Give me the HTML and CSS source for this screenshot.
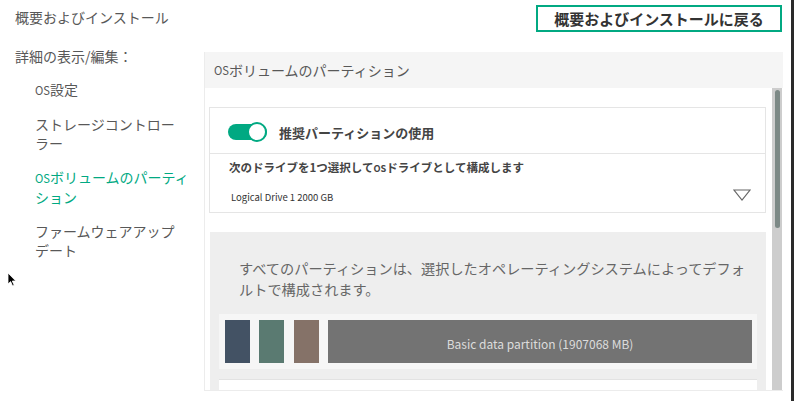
FILE: index.html
```html
<!DOCTYPE html>
<html lang="ja">
  <head>
    <meta charset="UTF-8" />
    <meta name="viewport" content="width=device-width, initial-scale=1.0" />
    <title>OSボリュームのパーティション</title>
    <link rel="stylesheet" href="styles.css">
  </head>
  <body>
    <div class="screen">
      <aside class="sidebar">
        <div class="side-title">概要およびインストール</div>
        <div class="side-label">詳細の表示/編集：</div>
        <ul class="side-menu">
          <li><span class="os">OS</span>設定</li>
          <li>ストレージコントロー<br />ラー</li>
          <li class="active"><span class="os">OS</span>ボリュームのパーティ<br />ション</li>
          <li>ファームウェアアップ<br />デート</li>
        </ul>
      </aside>

      <main class="main">
        <div class="toolbar">
          <button type="button" class="back-btn">概要およびインストールに戻る</button>
        </div>

        <section class="panel">
          <div class="panel-head"><span class="os">OS</span>ボリュームのパーティション</div>
          <div class="panel-body">
            <div class="panel-scroll">
              <div class="card">
                <div class="toggle-row">
                  <span class="switch"><span class="knob"></span></span>
                  <span class="toggle-label">推奨パーティションの使用</span>
                </div>
                <div class="drive-row">
                  <div class="drive-label">次のドライブを1つ選択して<span class="os">OS</span>ドライブとして構成します</div>
                  <div class="drive-select">
                    <span>Logical Drive 1 2000 GB</span>
                    <svg width="18" height="12" viewBox="0 0 18 12">
                      <path d="M1 1 L17 1 L9 11 Z" fill="none" stroke="#666" stroke-width="1.2" stroke-linejoin="miter" />
                    </svg>
                  </div>
                </div>
              </div>

              <div class="info">
                <p>すべてのパーティションは、選択したオペレーティングシステムによってデフォ<br />ルトで構成されます。</p>
                <div class="partbar">
                  <div class="part p1"></div>
                  <div class="part p2"></div>
                  <div class="part p3"></div>
                  <div class="part p-main">Basic data partition (1907068 MB)</div>
                </div>
                <div class="next-card"></div>
              </div>
            </div>
            <div class="scrollbar"><div class="thumb"></div></div>
          </div>
        </section>
      </main>

      <div class="edge"></div>

      <svg class="cursor" width="10" height="15" viewBox="0 0 10 15">
        <path d="M1 1 L1 12 L3.6 9.6 L5.6 14 L7.2 13.3 L5.3 9 L8.8 9 Z" fill="#000" stroke="#fff" stroke-width="0.8" />
      </svg>
    </div>
  </body>
</html>
```

FILE: styles.css
```css
* {
  box-sizing: border-box;
}
html,
body {
  margin: 0;
  padding: 0;
  background-color: #fff;
}
body {
  font-family: "Noto Sans CJK JP", "Noto Sans", sans-serif;
  color: #555;
}
.screen {
  position: relative;
  display: flex;
  width: 794px;
  height: 401px;
  overflow: hidden;
}
.os {
  font-size: 0.8em;
}

/* sidebar */
.sidebar {
  width: 204px;
  flex: none;
  padding: 7px 0 0 15px;
  font-size: 14px;
  color: #585858;
}
.side-title {
  line-height: 20px;
}
.side-label {
  line-height: 20px;
  margin-top: 19px;
}
.side-menu {
  list-style: none;
  margin: 14px 0 0;
  padding: 0 0 0 20px;
  display: flex;
  flex-direction: column;
  gap: 15px;
}
.side-menu li {
  line-height: 19px;
}
.side-menu li.active {
  color: #01a982;
}

/* main */
.main {
  width: 579px;
  flex: none;
  display: flex;
  flex-direction: column;
}
.toolbar {
  height: 52px;
  padding-top: 5px;
  display: flex;
  justify-content: flex-end;
  align-items: flex-start;
}
.back-btn {
  width: 246px;
  height: 27px;
  margin-right: 1px;
  padding: 0;
  background: #fff;
  border: solid 2px #01a982;
  border-radius: 0;
  font-family: inherit;
  font-size: 15px;
  font-weight: bold;
  color: #333;
  cursor: pointer;
}
.panel {
  height: 339px;
  border-left: solid 1px #ececec;
  border-bottom: solid 1px #ececec;
  display: flex;
  flex-direction: column;
}
.panel-head {
  height: 36px;
  flex: none;
  display: flex;
  align-items: center;
  padding-left: 9px;
  background: #f5f5f5;
  font-size: 14px;
  color: #585858;
}
.panel-body {
  flex: 1;
  display: flex;
  min-height: 0;
}
.panel-scroll {
  flex: 1;
  overflow: hidden;
  padding: 19px 6px 0 4px;
}
.scrollbar {
  width: 10px;
  margin-right: 1px;
  flex: none;
  background: #cdcdcd;
  padding: 2px 0 0 3px;
}
.thumb {
  width: 5px;
  height: 138px;
  border-radius: 3px;
  background: #7c8986;
}

/* card */
.card {
  border: solid 1px #e5e5e5;
  background: #fff;
}
.toggle-row {
  height: 46px;
  padding: 3px 0 0 18px;
  display: flex;
  align-items: center;
  border-bottom: solid 1px #e5e5e5;
}
.switch {
  position: relative;
  width: 39px;
  height: 16px;
  border-radius: 8px;
  background: #01a982;
}
.knob {
  position: absolute;
  right: 0;
  top: -2px;
  width: 20px;
  height: 20px;
  border-radius: 50%;
  background: #fff;
  border: solid 2px #01a982;
}
.toggle-label {
  margin-left: 12px;
  font-size: 13px;
  font-weight: bold;
  color: #444;
}
.drive-row {
  padding: 5px 14px 8px 19px;
}
.drive-label {
  font-size: 11.5px;
  line-height: 16px;
  font-weight: bold;
  color: #444;
}
.drive-select {
  margin-top: 14px;
  height: 14px;
  display: flex;
  justify-content: space-between;
  align-items: center;
  font-size: 9.5px;
  color: #333;
  padding-left: 2px;
}
.drive-select svg {
  margin-top: -5px;
}

/* info section */
.info {
  margin: 19px 0 0 1px;
  background: #eee;
  padding: 0 9px 10px;
}
.info p {
  margin: 0;
  padding: 26px 0 0 20px;
  font-size: 14.2px;
  line-height: 21px;
  color: #666;
  white-space: nowrap;
}
.partbar {
  margin-top: 14px;
  height: 55px;
  padding: 6px 5px 6px 6px;
  background: #f6f6f6;
  display: flex;
  gap: 9px;
}
.part {
  width: 25px;
  flex: none;
}
.p1 {
  background: #435264;
}
.p2 {
  background: #5a7a71;
}
.p3 {
  background: #857268;
  margin-left: 1px;
}
.p-main {
  flex: 1;
  background: #737373;
  color: #dcdcdc;
  font-size: 12px;
  display: flex;
  align-items: center;
  justify-content: center;
  padding-top: 4px;
}
.next-card {
  margin-top: 10px;
  height: 30px;
  background: #fff;
  border-top: solid 1px #e2e2e2;
}

.edge {
  margin-left: auto;
  width: 3px;
  background: #2a2a2a;
}
.cursor {
  position: absolute;
  left: 7px;
  top: 272px;
}
```
